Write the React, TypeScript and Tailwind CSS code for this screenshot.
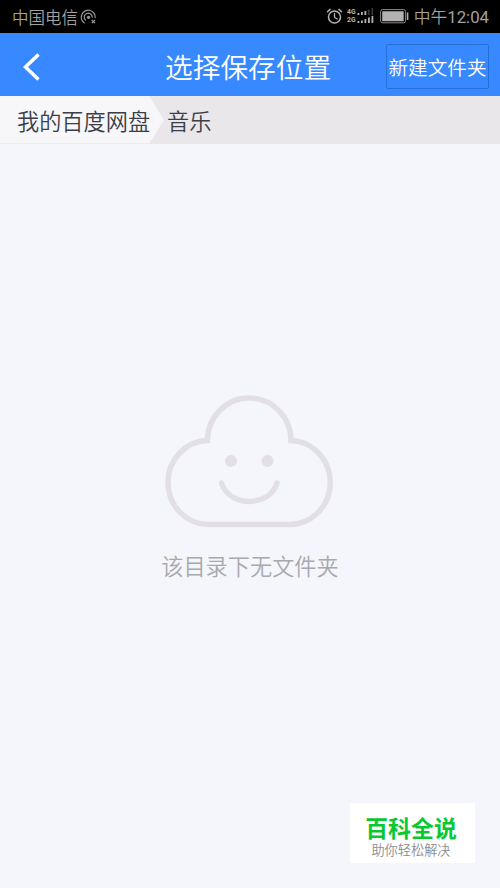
import React from "react";

const AlarmIcon = () => (
  <svg width="17" height="18" viewBox="0 0 17 18" fill="none" stroke="#b4b1b1" strokeLinecap="round">
    <circle cx="8.5" cy="10" r="6" strokeWidth="1.5" />
    <path d="M8.500 6.500v3.700l2.700 1.800" strokeWidth="1.300" />
    <path d="M1.500 4.800l2.600-2.400M15.500 4.800l-2.600-2.400" strokeWidth="1.500" />
  </svg>
);

const HotspotIcon = () => (
  <svg width="17" height="16" viewBox="0 0 17 16" fill="none" stroke="#9a9797" strokeWidth="1.2">
    <path d="M4.600 14.200A7 7 0 1 1 15.200 9.200" />
    <path d="M5.800 11.300A4 4 0 1 1 12.200 8.600" />
    <circle cx="8.500" cy="8.300" r="1.600" fill="#9a9797" stroke="none" />
    <path d="M11.800 11l3.200 3.200M15 11l-3.200 3.200" />
  </svg>
);

const SignalIcon = () => (
  <svg width="17" height="18" viewBox="0 0 17 18" fill="#b4b1b1">
    <path d="M0.500 6h1.800v2h-1.800zM4 5h1.800v3h-1.800zM7.500 4h1.800v4h-1.800z" />
    <path d="M11 2.500h1.600v5.500h-1.600zM14.500 1h1.600v7h-1.600z" fill="#3a3838" />
    <path d="M0.500 14h1.800v2h-1.800zM4 13.500h1.800v2.500h-1.800zM7.500 12h1.800v4h-1.800zM11 10.500h1.800v5.500h-1.800zM14.500 9h1.800v7h-1.800z" />
  </svg>
);

const BatteryIcon = () => (
  <svg width="29" height="15" viewBox="0 0 29 15" fill="none">
    <rect x="0.600" y="0.600" width="25" height="13.200" rx="2" stroke="#8d8a8a" strokeWidth="1" />
    <rect x="2.200" y="2.200" width="21.500" height="10" rx="0.500" fill="#b4b1b1" />
    <path d="M27.600 3.500v7.500" stroke="#b4b1b1" strokeWidth="1.500" />
  </svg>
);

const CloudIcon = () => (
  <svg className="mr-0.5" width="172" height="136" viewBox="0 0 172 136" fill="none" stroke="#e2e0e4" strokeWidth="5.500">
    <path d="M44.500 47.500A41.750 42.500 0 0 1 128 47.500A40.750 42 0 0 1 125 131.500H47A40.750 42 0 0 1 44.500 47.500Z" />
    <circle cx="68" cy="68" r="6" fill="#e2e0e4" stroke="none" />
    <circle cx="104.500" cy="68" r="6" fill="#e2e0e4" stroke="none" />
    <path d="M58.500 90C66 114.500 107 114.500 114 90" strokeLinecap="round" />
  </svg>
);

const StatusBar = () => (
  <div className="flex h-[33px] items-center bg-black text-[#a3a0a0]">
    <span className="ml-3 pt-0.5 text-[16.500px] leading-none font-[350]">中国电信</span>
    <div className="ml-0.5 pt-px">
      <HotspotIcon />
    </div>
    <div className="ml-auto flex items-center pr-[11px]">
      <AlarmIcon />
      <div className="ml-1 w-[10px]">
        <div className="flex w-[12px] origin-left scale-x-[0.850] flex-col font-['Roboto',sans-serif] text-[8px] leading-[8px] font-bold text-[#b4b1b1]">
          <span>4G</span>
          <span>2G</span>
        </div>
      </div>
      <SignalIcon />
      <div className="ml-1.5">
        <BatteryIcon />
      </div>
      <span className="ml-[5px] pt-0.5 font-['Roboto','Noto_Sans_CJK_SC',sans-serif] text-[16.800px] leading-none">
        <span className="font-[350]">中午</span>12:04
      </span>
    </div>
  </div>
);

const Header = () => (
  <div className="flex h-[63px] items-center bg-[#3888ff] text-white">
    <svg className="mt-1 ml-[21px] shrink-0" width="20" height="30" viewBox="0 0 20 30" fill="none" stroke="white" strokeWidth="3.500">
      <path d="M17.500 2.500L4.500 15L17.500 27.500" />
    </svg>
    <h1 className="ml-[124px] pt-1 text-[27.700px] leading-none font-[350]">选择保存位置</h1>
    <button className="mt-1 mr-[11px] ml-auto h-[45px] w-[103px] rounded-xs border border-[#2670d8] pt-px text-[19.600px] leading-none font-[350] whitespace-nowrap">
      新建文件夹
    </button>
  </div>
);

const Breadcrumb = () => (
  <div className="flex h-12 items-center bg-[#e9e7e9] text-[22.200px] leading-none font-[350] text-[#3b3e49]">
    <div className="flex h-full w-[164px] items-center border-b border-[#ececf0] bg-[#f7f6f8] pt-0.5 pl-[17px] whitespace-nowrap [clip-path:polygon(0_0,149px_0,100%_50%,149px_100%,0_100%)]">
      我的百度网盘
    </div>
    <span className="ml-[3px]">音乐</span>
  </div>
);

const App = () => {
  return (
    <div className="flex h-[888px] w-[500px] flex-col overflow-hidden bg-[#f4f6fb] font-['Noto_Sans_CJK_SC',sans-serif]">
      <StatusBar />
      <Header />
      <Breadcrumb />
      <div className="flex flex-col items-center pt-[249px]">
        <CloudIcon />
        <p className="mt-[25px] text-[22.200px] leading-none font-[350] text-[#a9a9ad]">该目录下无文件夹</p>
      </div>
      <div className="mt-auto mr-[25px] mb-[25px] flex h-[60px] w-[125px] flex-col items-center self-end bg-white pt-[13px] pr-[3px]">
        <span className="text-[22.900px] leading-none font-bold text-[#0ac832]">百科全说</span>
        <span className="mt-1 text-[13.200px] leading-none font-[350] text-[#8c8c8c]">助你轻松解决</span>
      </div>
    </div>
  );
};

export default App;
